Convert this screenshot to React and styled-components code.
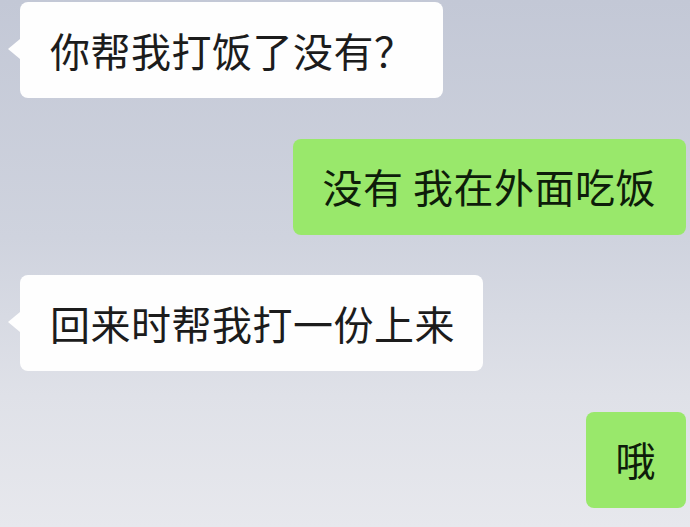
import React from "react";
import styled, { createGlobalStyle } from "styled-components";

const Global = createGlobalStyle`
  html, body { margin: 0; padding: 0; }
  body { background: #d6d9e2; }
`;

const Screen = styled.div`
  width: 690px;
  height: 527px;
  overflow: hidden;
  box-sizing: border-box;
  padding: 2px 4px 0 20px;
  display: flex;
  flex-direction: column;
  gap: 40.5px;
  background: linear-gradient(180deg, #c3c8d6 0%, #cfd3de 45%, #dfe1e8 75%, #e7e8ed 100%);
  font-family: "Noto Sans CJK SC", "Noto Sans", sans-serif;
`;

const Row = styled.div`
  display: flex;
  justify-content: ${(p) => (p.$mine ? "flex-end" : "flex-start")};
`;

const Bubble = styled.div`
  position: relative;
  box-sizing: border-box;
  height: 96px;
  padding: 0 ${(p) => (p.$mine ? "30px" : "28px")} 0 30px;
  display: flex;
  align-items: center;
  border-radius: 8px;
  font-size: 40px;
  line-height: 55px;
  letter-spacing: 0.5px;
  white-space: pre;
  background: ${(p) => (p.$mine ? "#99e86b" : "#fefefe")};
  color: ${(p) => (p.$mine ? "#0e1d0a" : "#1c1c1c")};

  ${(p) =>
    !p.$mine &&
    `
    &::before {
      content: "";
      position: absolute;
      left: -12px;
      top: 37px;
      width: 0;
      height: 0;
      border-top: 10px solid transparent;
      border-bottom: 10px solid transparent;
      border-right: 12px solid #fefefe;
    }
  `}
`;

const messages = [
  { mine: false, text: "你帮我打饭了没有？" },
  { mine: true, text: "没有 我在外面吃饭" },
  { mine: false, text: "回来时帮我打一份上来" },
  { mine: true, text: "哦" },
];

export default function App() {
  return (
    <>
      <Global />
      <Screen>
        {messages.map((m, i) => (
          <Row key={i} $mine={m.mine}>
            <Bubble $mine={m.mine}>{m.text}</Bubble>
          </Row>
        ))}
      </Screen>
    </>
  );
}
